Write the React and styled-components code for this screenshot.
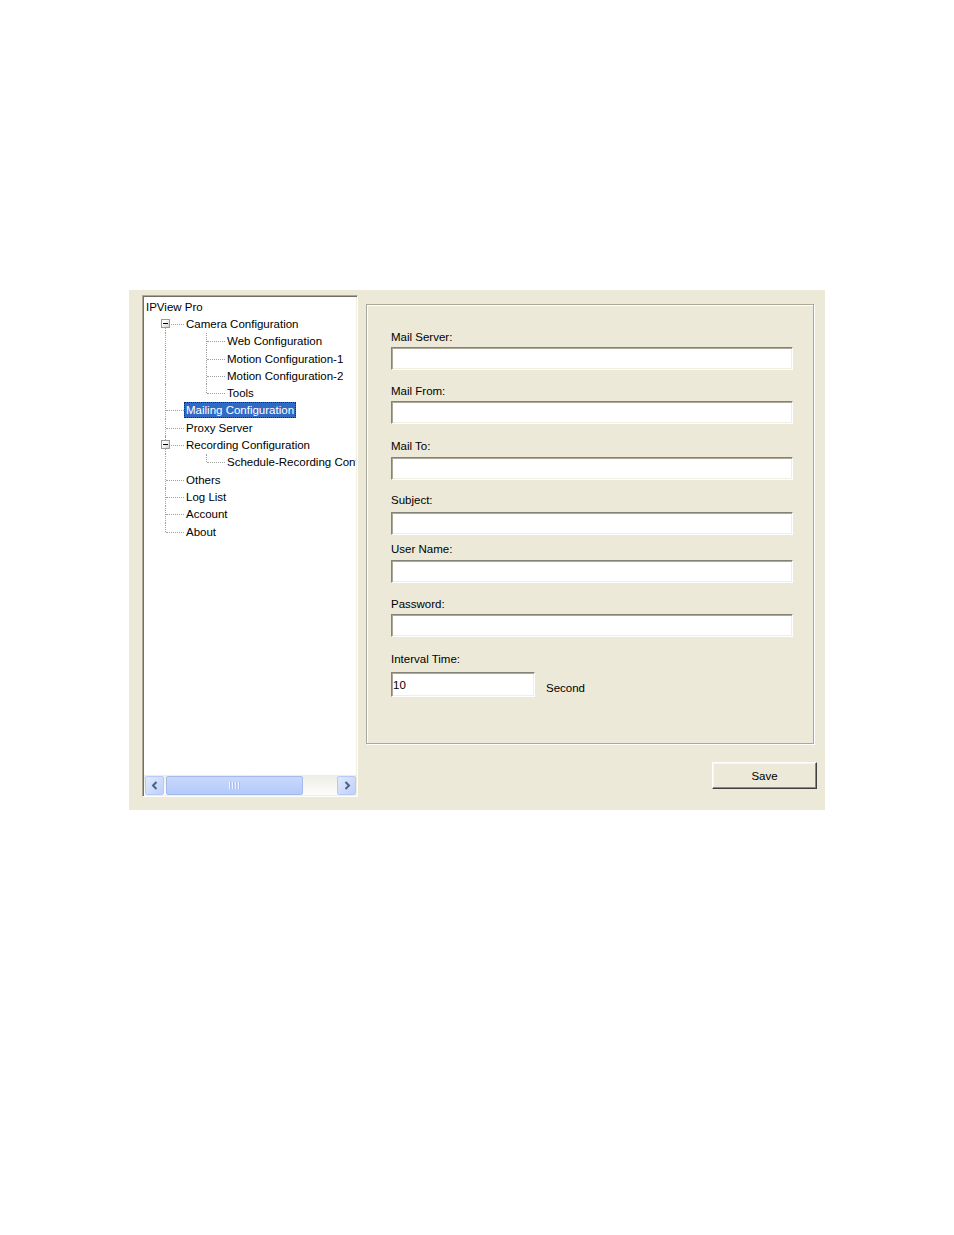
import React from "react";
import styled, { createGlobalStyle, css } from "styled-components";

const GlobalStyle = createGlobalStyle`
  body {
    margin: 0;
    background: #fff;
    font-family: "Liberation Sans", Arial, sans-serif;
  }
`;

const Page = styled.div`
  min-height: 1235px;
  padding: 290px 0 0 129px;
  box-sizing: border-box;
`;

const Dialog = styled.div`
  width: 696px;
  height: 520px;
  box-sizing: border-box;
  background: #ece9d8;
  display: flex;
  align-items: flex-start;
  padding: 5px 0 0 13px;
  font-size: 11.5px;
  color: #000;
`;

/* ---------- tree ---------- */

const TreeBox = styled.div`
  width: 216px;
  height: 502px;
  box-sizing: border-box;
  background: #fff;
  border: 1px solid;
  border-color: #aca899 #fff #fff #aca899;
  box-shadow: inset 1px 1px 0 #716f64, inset -1px -1px 0 #f1efe2;
  padding: 1px;
  display: flex;
  flex-direction: column;
`;

const TreeList = styled.div`
  flex: 1;
  overflow: hidden;
  padding-top: 1px;
`;

const Row = styled.div`
  height: 17.3px;
  display: flex;
  align-items: stretch;
  white-space: nowrap;
`;

const dots = "1px dotted #a0a0a0";

const Spacer = styled.div`
  width: 41px;
  flex-shrink: 0;
  position: relative;
  &::before {
    content: "";
    position: absolute;
    left: 21px;
    top: 0;
    bottom: 0;
    border-left: ${dots};
  }
`;

const Connector = styled.div`
  width: 40px;
  flex-shrink: 0;
  position: relative;
  &::before {
    content: "";
    position: absolute;
    left: 21px;
    border-left: ${dots};
    ${(p) =>
      p.$line === "down"
        ? css`top: 50%; bottom: 0;`
        : p.$line === "up"
        ? css`top: 0; height: 50%;`
        : css`top: 0; bottom: 0;`}
  }
  &::after {
    content: "";
    position: absolute;
    left: 22px;
    right: 0;
    top: 50%;
    border-top: ${dots};
  }
`;

const Expander = styled.span`
  position: absolute;
  left: 17px;
  top: 50%;
  margin-top: -5px;
  width: 9px;
  height: 9px;
  box-sizing: border-box;
  border: 1px solid #949c9c;
  background: linear-gradient(135deg, #fff 30%, #d4d0c4);
  z-index: 1;
  &::after {
    content: "";
    position: absolute;
    left: 1px;
    top: 3px;
    width: 5px;
    height: 1px;
    background: #000;
  }
`;

const Label = styled.span`
  align-self: center;
  line-height: 14px;
  padding: 1px 2px;
  ${(p) =>
    p.$selected &&
    css`
      background: #316ac5;
      color: #fff;
      outline: 1px dotted #1b2a40;
      outline-offset: -1px;
    `}
`;

const ScrollBar = styled.div`
  height: 20px;
  flex-shrink: 0;
  display: flex;
  align-items: center;
  background: linear-gradient(#eeede5, #fdfdfb);
  padding: 0 0 0 1px;
`;

const ScrollButton = styled.div`
  width: 19px;
  height: 19px;
  box-sizing: border-box;
  border: 1px solid #b7caf5;
  border-radius: 2px;
  background: linear-gradient(135deg, #e0e9fe, #bdd0fa);
  display: flex;
  align-items: center;
  justify-content: center;
  margin-left: ${(p) => (p.$right ? "auto" : "0")};
`;

const Thumb = styled.div`
  width: 137px;
  height: 19px;
  margin-left: 2px;
  box-sizing: border-box;
  border: 1px solid #a3baec;
  border-radius: 2px;
  background: linear-gradient(#c9d8fd, #b4cafa);
  display: flex;
  align-items: center;
  justify-content: center;
  gap: 1px;
`;

const Grip = styled.span`
  width: 1px;
  height: 7px;
  background: #eef3ff;
  box-shadow: 1px 0 0 #a6bdf0;
  margin-right: 1px;
`;

const Arrow = ({ dir }) => (
  <svg width="8" height="9" viewBox="0 0 8 9">
    <path
      d={dir === "left" ? "M5.5 1 L2 4.5 L5.5 8" : "M2.5 1 L6 4.5 L2.5 8"}
      fill="none"
      stroke="#4d6185"
      strokeWidth="2"
    />
  </svg>
);

const nodes = [
  { label: "IPView Pro", level: 0 },
  { label: "Camera Configuration", level: 1, line: "down", expander: true },
  { label: "Web Configuration", level: 2, line: "full" },
  { label: "Motion Configuration-1", level: 2, line: "full" },
  { label: "Motion Configuration-2", level: 2, line: "full" },
  { label: "Tools", level: 2, line: "up" },
  { label: "Mailing Configuration", level: 1, line: "full", selected: true },
  { label: "Proxy Server", level: 1, line: "full" },
  { label: "Recording Configuration", level: 1, line: "full", expander: true },
  { label: "Schedule-Recording Configuration", level: 2, line: "up" },
  { label: "Others", level: 1, line: "full" },
  { label: "Log List", level: 1, line: "full" },
  { label: "Account", level: 1, line: "full" },
  { label: "About", level: 1, line: "up" },
];

function Tree() {
  return (
    <TreeBox>
      <TreeList>
        {nodes.map((n) => (
          <Row key={n.label}>
            {n.level === 2 && <Spacer />}
            {n.level > 0 && (
              <Connector $line={n.line}>{n.expander && <Expander />}</Connector>
            )}
            <Label $selected={n.selected}>{n.label}</Label>
          </Row>
        ))}
      </TreeList>
      <ScrollBar>
        <ScrollButton>
          <Arrow dir="left" />
        </ScrollButton>
        <Thumb>
          <Grip />
          <Grip />
          <Grip />
          <Grip />
        </Thumb>
        <ScrollButton $right>
          <Arrow dir="right" />
        </ScrollButton>
      </ScrollBar>
    </TreeBox>
  );
}

/* ---------- mail form ---------- */

const RightCol = styled.div`
  width: 451px;
  margin: 9px 0 0 8px;
  display: flex;
  flex-direction: column;
  align-items: flex-end;
`;

const GroupBox = styled.div`
  align-self: flex-start;
  width: 448px;
  height: 440px;
  box-sizing: border-box;
  border: 1px solid #aca899;
  box-shadow: inset 1px 1px 0 #fff, 1px 1px 0 #fff;
  padding: 0 0 0 24px;
`;

const Field = styled.div`
  margin-top: ${(p) => p.$top}px;
`;

const FieldLabel = styled.div`
  line-height: 14px;
  height: 14px;
  margin-bottom: ${(p) => p.$gap ?? 3}px;
`;

const TextBox = styled.input`
  display: block;
  width: ${(p) => p.$w || 402}px;
  height: ${(p) => p.$h || 23}px;
  box-sizing: border-box;
  margin: 0;
  padding: 0 1px;
  border: 1px solid;
  border-color: #858375 #fff #fff #858375;
  box-shadow: inset 1px 1px 0 #aca899, inset -1px -1px 0 #f1efe2;
  background: #fff;
  font: inherit;
  color: #000;
  outline: none;
`;

const InlineRow = styled.div`
  display: flex;
  align-items: center;
`;

const Unit = styled.span`
  margin: 6px 0 0 11px;
`;

const Button = styled.button`
  margin-top: 18px;
  width: 105px;
  height: 27px;
  box-sizing: border-box;
  border: 1px solid;
  border-color: #fff #404040 #404040 #fff;
  box-shadow: inset -1px -1px 0 #8c8a80, inset 1px 1px 0 #f6f5ee;
  background: #ece9d8;
  font: inherit;
  color: #000;
  padding: 0;
`;

const fields = [
  { label: "Mail Server:", top: 25, gap: 3 },
  { label: "Mail From:", top: 14, gap: 3 },
  { label: "Mail To:", top: 15, gap: 4 },
  { label: "Subject:", top: 13, gap: 5 },
  { label: "User Name:", top: 7, gap: 4 },
  { label: "Password:", top: 14, gap: 3, type: "password" },
];

export default function App() {
  return (
    <Page>
      <GlobalStyle />
      <Dialog>
        <Tree />
        <RightCol>
          <GroupBox>
            {fields.map((f) => (
              <Field key={f.label} $top={f.top}>
                <FieldLabel $gap={f.gap}>{f.label}</FieldLabel>
                <TextBox type={f.type || "text"} defaultValue="" />
              </Field>
            ))}
            <Field $top={15}>
              <FieldLabel $gap={6}>Interval Time:</FieldLabel>
              <InlineRow>
                <TextBox $w={144} $h={25} defaultValue="10" />
                <Unit>Second</Unit>
              </InlineRow>
            </Field>
          </GroupBox>
          <Button>Save</Button>
        </RightCol>
      </Dialog>
    </Page>
  );
}
